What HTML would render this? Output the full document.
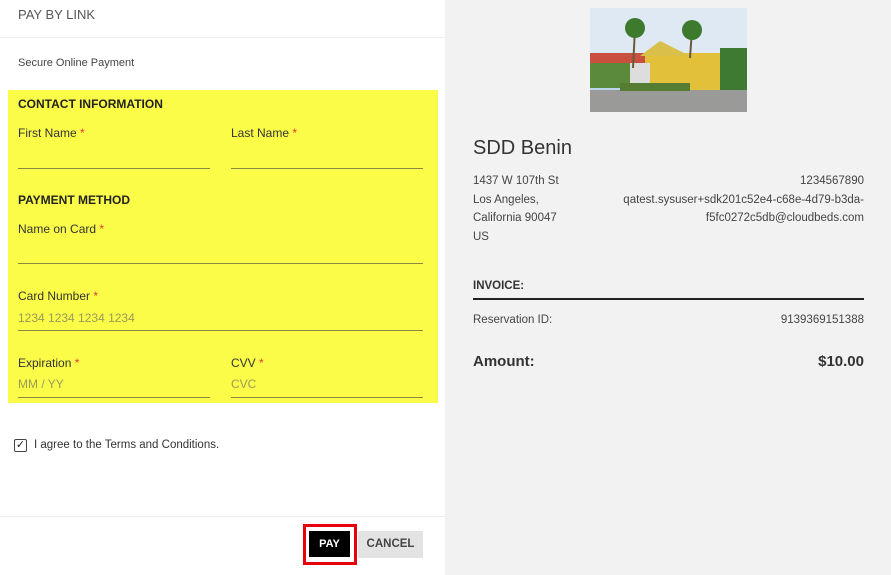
<!DOCTYPE html>
<html><head><style>
*{margin:0;padding:0;box-sizing:border-box}
body{width:891px;height:575px;overflow:hidden;font-family:"Liberation Sans",sans-serif;background:#fff;position:relative;color:#333}
.a{position:absolute;white-space:nowrap}
#right{position:absolute;left:445px;top:0;width:446px;height:575px;background:#f2f2f2}
.lbl{font-size:12px;color:#333}
.st{color:#e53935}
.ln{position:absolute;height:1px;background:#8a8a40}
.ph{font-size:12px;color:#9a9a5a}
.h{font-size:12px;font-weight:bold;color:#222}
.r{font-size:11.5px;color:#444}
</style></head><body>
<div class="a" style="left:18px;top:7px;font-size:13px;color:#555">PAY BY LINK</div>
<div class="a" style="left:0;top:37px;width:445px;height:1px;background:#eee"></div>
<div class="a" style="left:18px;top:57px;font-size:11px;color:#444">Secure Online Payment</div>
<div class="a" style="left:8px;top:90px;width:430px;height:313px;background:#fbfc48"></div>
<div class="a h" style="left:18px;top:97px">CONTACT INFORMATION</div>
<div class="a lbl" style="left:18px;top:126px">First Name <span class="st">*</span></div>
<div class="a lbl" style="left:231px;top:126px">Last Name <span class="st">*</span></div>
<div class="ln" style="left:18px;top:168px;width:192px"></div>
<div class="ln" style="left:231px;top:168px;width:192px"></div>
<div class="a h" style="left:18px;top:193px">PAYMENT METHOD</div>
<div class="a lbl" style="left:18px;top:222px">Name on Card <span class="st">*</span></div>
<div class="ln" style="left:18px;top:263px;width:405px"></div>
<div class="a lbl" style="left:18px;top:289px">Card Number <span class="st">*</span></div>
<div class="a ph" style="left:18px;top:311px">1234 1234 1234 1234</div>
<div class="ln" style="left:18px;top:330px;width:405px"></div>
<div class="a lbl" style="left:18px;top:356px">Expiration <span class="st">*</span></div>
<div class="a lbl" style="left:231px;top:356px">CVV <span class="st">*</span></div>
<div class="a ph" style="left:18px;top:377px">MM / YY</div>
<div class="a ph" style="left:231px;top:377px">CVC</div>
<div class="ln" style="left:18px;top:397px;width:192px"></div>
<div class="ln" style="left:231px;top:397px;width:192px"></div>
<div class="a" style="left:14px;top:439px;width:13px;height:13px;border:1.5px solid #444;border-radius:2px;font-size:11px;line-height:10px;text-align:center;color:#222">✓</div>
<div class="a" style="left:34px;top:439px;font-size:11.5px;color:#333">I agree to the Terms and Conditions.</div>
<div class="a" style="left:0;top:516px;width:445px;height:1px;background:#eee"></div>
<div class="a" style="left:303px;top:524px;width:54px;height:41px;border:3px solid #e8000b"></div>
<div class="a" style="left:309px;top:531px;width:41px;height:26px;background:#000;color:#fff;font-size:11px;font-weight:bold;line-height:26px;text-align:center">PAY</div>
<div class="a" style="left:358px;top:531px;width:65px;height:27px;background:#e3e3e3;color:#444;font-size:11.5px;font-weight:bold;line-height:27px;text-align:center">CANCEL</div>
<div id="right">
<svg class="a" style="left:145px;top:8px" width="157" height="104" viewBox="0 0 157 104">
<rect width="157" height="104" fill="#bcd6ee"/>
<rect y="0" width="157" height="45" fill="#dfe9f3"/>
<rect y="45" width="157" height="30" fill="#c9503f"/>
<rect x="55" y="45" width="75" height="38" fill="#e2c03a"/>
<polygon points="50,48 70,33 100,48" fill="#d8c04a"/>
<rect x="0" y="55" width="55" height="25" fill="#5a8a3a"/>
<rect x="130" y="40" width="27" height="45" fill="#3e7a32"/>
<rect x="40" y="55" width="20" height="22" fill="#ddd"/>
<rect x="0" y="82" width="157" height="22" fill="#9a9a98"/>
<rect x="30" y="75" width="70" height="8" fill="#567c34"/>
<path d="M43 60 L45 20 M100 50 L102 22" stroke="#6b5a3a" stroke-width="2"/>
<circle cx="45" cy="20" r="10" fill="#3d7a2e"/><circle cx="102" cy="22" r="10" fill="#3d7a2e"/>
</svg>
<div class="a" style="left:28px;top:137px;font-size:20px;color:#333">SDD Benin</div>
<div class="a r" style="left:28px;top:172px;line-height:18.5px">1437 W 107th St<br>Los Angeles,<br>California 90047<br>US</div>
<div class="a r" style="right:27px;top:172px;line-height:18.5px;text-align:right">1234567890<br>qatest.sysuser+sdk201c52e4-c68e-4d79-b3da-<br>f5fc0272c5db@cloudbeds.com</div>
<div class="a" style="left:28px;top:280px;font-size:11.5px;font-weight:bold;color:#333">INVOICE:</div>
<div class="a" style="left:28px;top:298px;width:391px;height:2px;background:#222"></div>
<div class="a r" style="left:28px;top:314px">Reservation ID:</div>
<div class="a r" style="right:27px;top:314px">9139369151388</div>
<div class="a" style="left:28px;top:353px;font-size:15px;font-weight:bold;color:#333">Amount:</div>
<div class="a" style="right:27px;top:353px;font-size:15px;font-weight:bold;color:#333">$10.00</div>
</div>
</body></html>
